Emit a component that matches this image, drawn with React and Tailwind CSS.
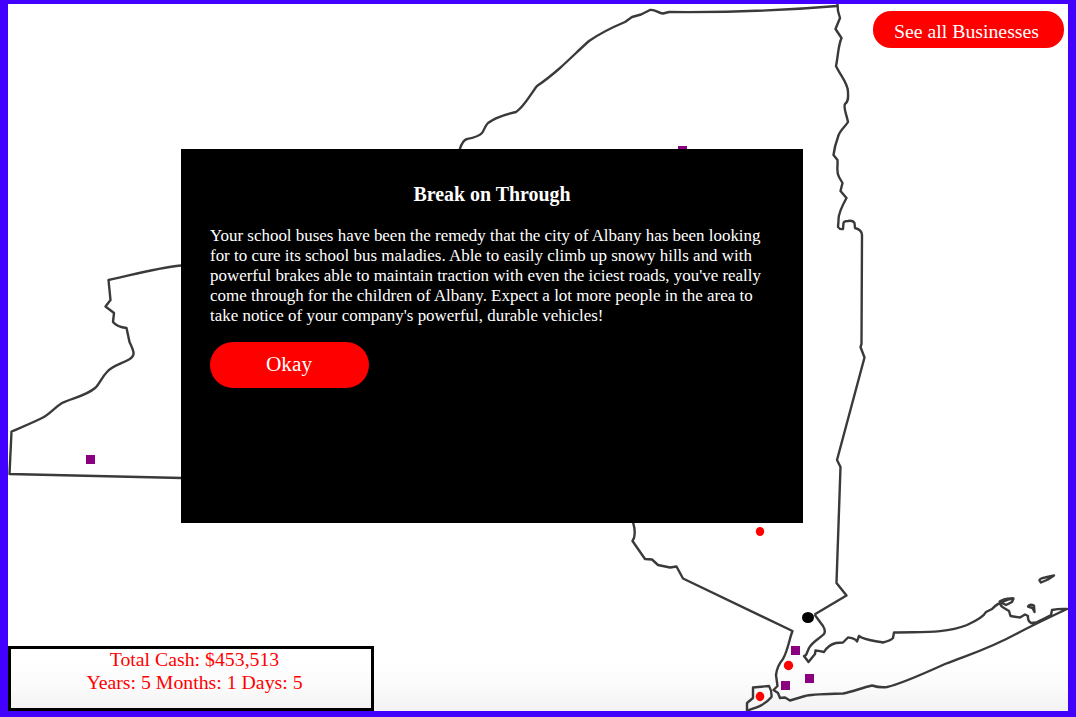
const OUTLINES = [
  // Lake Ontario and St. Lawrence shore, northern border
  "M459.5 150 C461 145 463 140 467 139 C472 138 478 137 482 133 C484 131 484 127 488 123 C496 117 507 114 516 112 C524 107 530 95 537 86 C546 80 552 75 560 68 C571 58 580 49 589 41 C602 32 613 27 625 22 L632 17 L641 14.500 L650 10 C655 9 658 13 663 13.500 L669 12 C720 12.500 790 10 837 6",
  // Eastern border
  "M837.500 4 L838 11 L840 18 L835.500 29 L841.500 38 C838 46 838 57 836 66 C840 75 848 83 848 92 C848 97 849 101 845 104 C843 107 847 116 848 122 C845 127 839 131 838 137 C835 145 834 151 833.500 155 L837.500 160 C838 167 836 172 839 177 L842.500 183 L840.500 191 L846.500 198 C842 206 838 215 838.500 221 L838 227 Q839.500 229.500 843 229 L843.500 223 Q844 221 848 221 Q853 220 854.500 223 L855 228 Q862 230 862 235 L861.500 344 L860.500 347 L864.500 357.500 L837 460 L840.500 467 L836.500 583 L846.500 595.500 L814.500 614.500",
  // Hudson and Bronx shore, Long Island, Delaware border
  "M814.500 614.500 L823 626 Q826 631 824 634 C819 639 813 641 809 648 L806 655 L804 656 L808.500 662 L815 654 L815.500 650.500 Q820 651 824 652 C827 647 832 644 836 643 L843 642.500 L848 637.500 C852 638 855 638 857 641.500 L859 636 C864 640 876 641 883 642.500 C887 641.500 891 640 893 638 L894 632.500 C920 631.500 944 634 967 625 C978 620 984 616 986 612 L992 609 C996 604 1001 602 1008 599.500 L1013.500 598.500 L1012 602 L1006 605 L1000 602 Q1000 606 1004 608 L1009 611 L1010.500 616 L1020 617.500 L1025 614.500 L1028 616 Q1027.500 621 1031 623 Q1037 623 1041 620.500 L1051 615 L1052 610 Q1059 608.500 1067 609 C1050 617 1033 625 1018 633 C987 650 970 654 945 664 C923 674 901 684 887 687 Q880 688 872 685.500 C861 688 852 692 843 693.500 C825 694 811 694 805 696 L790 700.500 L785 697.500 L780 698 L778 693 L773.500 690 L777.500 686 L776 675 Q777 666 783 659 C788 650 789 640 792.500 631 L683 578.500 L676.500 566.500 L670 567.500 L658 565 L652 559.500 L645 559 L632.500 541 C636 536 635 529 633 522",
  // Staten Island
  "M753 687.500 L769 686 Q772 691 771.500 697 C764 706 755 708 747 710.500 L747 703 L753 698 Z",
  // Western border
  "M181 265.500 C156 268 132 275 108.500 280 L110.500 300 L105.500 306.500 L114 313 L113 322 Q117 327 126.500 328 L129.500 342 C135 353 135 356 129 359.500 C121 364 112 366 107 372 C101 378 99 385 95 388 C86 396 72 398 62 403 C54 408 50 414 42 418 C32 423 22 427 11.500 431.500 L9.500 474 L182 478",
  // Small islands at the eastern tip
  "M1039.500 580.500 Q1039.500 578.500 1045 577.500 L1054 575.500 L1048 579.500 L1041 582.500 Z",
  "M1028 606.500 Q1030 603.500 1034 605.500 L1034.500 612 L1032.500 608 Z",
  "M999 602 Q1004 598 1013 598.500",
  "M1038 621.500 L1050 616",
];

const SQUARES = [[678, 146], [86, 455], [791, 646], [781, 681], [805, 674]];

const DOTS = [
  { cx: 760, cy: 531.5, rx: 4.2, ry: 4.5 },
  { cx: 788.5, cy: 665.5, rx: 4.7, ry: 4.7 },
  { cx: 760, cy: 696.5, rx: 4.3, ry: 4.7 },
];

function StateMap() {
  return (
    <svg className="absolute inset-0 h-full w-full" viewBox="8 4 1060 707">
      <g fill="none" stroke="#3a3a3a" strokeWidth="2.4" strokeLinejoin="round">
        {OUTLINES.map((d) => (
          <path key={d} d={d} />
        ))}
      </g>
      {SQUARES.map(([x, y]) => (
        <rect key={`${x}-${y}`} x={x} y={y} width="9" height="9" fill="#8b0080" />
      ))}
      {DOTS.map((dot) => (
        <ellipse key={`${dot.cx}-${dot.cy}`} {...dot} fill="#ff0000" />
      ))}
      <ellipse cx="808" cy="617.500" rx="6" ry="5.500" fill="#000000" />
    </svg>
  );
}

const MESSAGE = [
  "Your school buses have been the remedy that the city of Albany has been looking",
  "for to cure its school bus maladies. Able to easily climb up snowy hills and with",
  "powerful brakes able to maintain traction with even the iciest roads, you've really",
  "come through for the children of Albany. Expect a lot more people in the area to",
  "take notice of your company's powerful, durable vehicles!",
];

function EventDialog() {
  return (
    <section className="absolute top-[145px] left-[173px] h-[374px] w-[622px] bg-black px-[29px] pt-[33px] text-white">
      <h3 className="text-center text-[19.9px] leading-6 font-bold">Break on Through</h3>
      <p className="mt-5 text-[16.94px] leading-5 whitespace-nowrap">
        {MESSAGE.map((line) => (
          <span key={line} className="block">{line}</span>
        ))}
      </p>
      <button className="mt-4 h-[46px] w-[159px] rounded-[23px] bg-[#ff0000] pr-px text-[21.3px]">
        Okay
      </button>
    </section>
  );
}

export default function App() {
  return (
    <main className="h-[717px] w-[1076px] overflow-hidden bg-[#4200ff] px-2 pt-1 pb-1.5 font-['Liberation_Serif',serif]">
      <div className="relative flex h-full flex-col justify-between bg-[linear-gradient(to_bottom,#ffffff_0,#ffffff_655px,#fbfbfb_682px,#f2f2f2_707px)]">
        <StateMap />
        <button className="relative mt-[7px] mr-1 h-[37px] w-[191px] self-end rounded-[18px] bg-[#ff0000] pt-[5px] pr-[4px] text-[19.8px] text-white">
          See all Businesses
        </button>
        <div className="relative h-[65px] w-[366px] border-3 border-black pl-[7px] text-center text-[19.8px] leading-[23px] text-[#ff0000]">
          <div className="-mt-px">
            <p>Total Cash: $453,513</p>
            <p>Years: 5 Months: 1 Days: 5</p>
          </div>
        </div>
        <EventDialog />
      </div>
    </main>
  );
}
